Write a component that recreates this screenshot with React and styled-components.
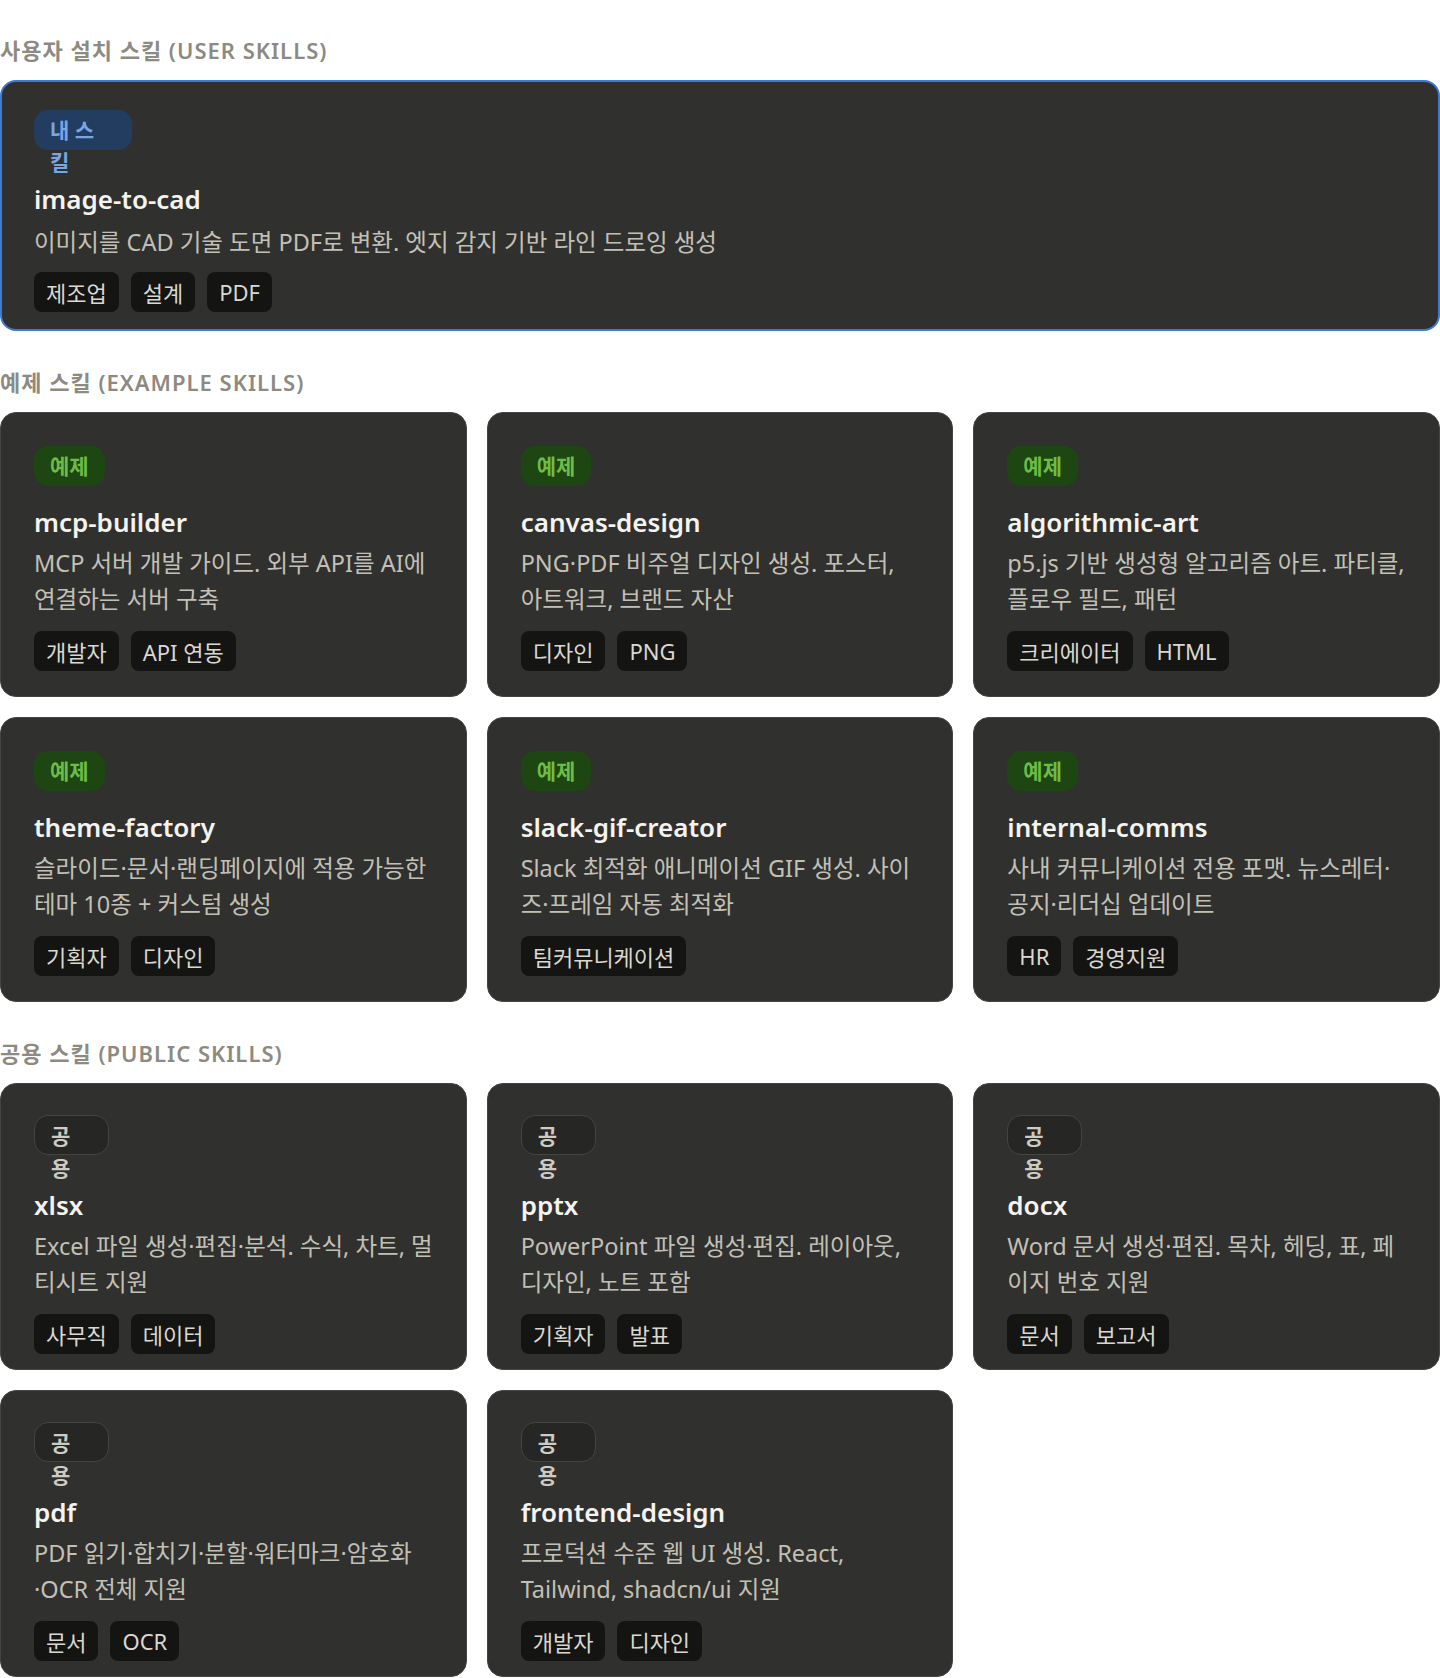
import React from 'react';
import styled, { createGlobalStyle, css } from 'styled-components';

const GlobalStyle = createGlobalStyle`
    html, body {
        margin: 0;
        padding: 0;
        background: #ffffff;
    }
    body {
        font-family: "Noto Sans", "Noto Sans CJK KR", sans-serif;
    }
    * {
        box-sizing: border-box;
    }
`;

const Page = styled.div`
    width: 1440px;
    padding-top: 36px;
    padding-bottom: 8px;
`;

const Section = styled.section`
    & + & {
        margin-top: 37px;
    }
`;

const Heading = styled.h2`
    margin: 0 0 16px;
    font-size: 22px;
    line-height: 28px;
    font-weight: 600;
    letter-spacing: 1px;
    color: #8d8a82;
`;

const Grid = styled.div`
    display: grid;
    grid-template-columns: ${p => (p.$single ? '1fr' : 'repeat(3, 1fr)')};
    gap: 20px;
`;

const cardLook = {
    mine: css`
        border: 2px solid #3c7ad3;
        padding: 28px 32px 17px 32px;
    `,
    example: css`
        border: 1px solid #444441;
        padding: 33px 32px 25px 33px;
    `,
    public: css`
        border: 1px solid #444441;
        padding: 33px 32px 15px 33px;
    `,
};

const Card = styled.div`
    display: flex;
    flex-direction: column;
    align-items: flex-start;
    background: #30302e;
    border-radius: 16px;
    ${p => cardLook[p.$kind]}
`;

const badgeSlot = {
    mine: css`height: 53px;`,
    example: css`height: 40px;`,
    public: css`height: 54px; margin-top: -2px;`,
};

const BadgeSlot = styled.div`
    ${p => badgeSlot[p.$kind]}
`;

const badgeLook = {
    mine: css`
        width: 98px;
        background: #233d60;
        color: #79a6e2;
    `,
    example: css`
        background: #1d4613;
        color: #6dbd45;
    `,
    public: css`
        width: 75px;
        background: #262624;
        border: 1px solid #444441;
        padding-left: 16px;
        color: #cdcbc2;
    `,
};

const Badge = styled.div`
    display: inline-block;
    height: 40px;
    padding: 4px 16px;
    border-radius: 14px;
    font-size: 21px;
    line-height: 32px;
    font-weight: 600;
    overflow: visible;
    ${p => badgeLook[p.$kind]}
`;

const BadgeText = styled.span`
    display: block;
    max-width: ${p => (p.$kind === 'mine' ? '2.6em' : p.$kind === 'public' ? '1.5em' : 'none')};
    white-space: ${p => (p.$kind === 'example' ? 'nowrap' : 'normal')};
`;

const Title = styled.h3`
    margin: 19px 0 0;
    font-size: 26px;
    line-height: 34px;
    font-weight: 600;
    color: #f4f3ee;
`;

const Desc = styled.p`
    margin: ${p => (p.$kind === 'mine' ? '8px 0 -2px' : '6px 0 0')};
    font-size: 23.5px;
    line-height: 36px;
    color: #c2c0b6;
`;

const DescLine = styled.span`
    display: block;
    white-space: nowrap;
`;

const Tags = styled.div`
    display: flex;
    gap: 12px;
    margin-top: 14px;
`;

const Tag = styled.span`
    display: inline-flex;
    align-items: center;
    height: 40px;
    padding: 0 12px;
    border-radius: 8px;
    background: #141413;
    color: #dad8d0;
    font-size: 22px;
`;

const badgeLabel = {
    mine: '내 스킬',
    example: '예제',
    public: '공용',
};

const sections = [
    {
        title: '사용자 설치 스킬 (USER SKILLS)',
        kind: 'mine',
        skills: [
            { name: 'image-to-cad', lines: ['이미지를 CAD 기술 도면 PDF로 변환. 엣지 감지 기반 라인 드로잉 생성'], tags: ['제조업', '설계', 'PDF'] },
        ],
    },
    {
        title: '예제 스킬 (EXAMPLE SKILLS)',
        kind: 'example',
        skills: [
            { name: 'mcp-builder', lines: ['MCP 서버 개발 가이드. 외부 API를 AI에', '연결하는 서버 구축'], tags: ['개발자', 'API 연동'] },
            { name: 'canvas-design', lines: ['PNG·PDF 비주얼 디자인 생성. 포스터,', '아트워크, 브랜드 자산'], tags: ['디자인', 'PNG'] },
            { name: 'algorithmic-art', lines: ['p5.js 기반 생성형 알고리즘 아트. 파티클,', '플로우 필드, 패턴'], tags: ['크리에이터', 'HTML'] },
            { name: 'theme-factory', lines: ['슬라이드·문서·랜딩페이지에 적용 가능한', '테마 10종 + 커스텀 생성'], tags: ['기획자', '디자인'] },
            { name: 'slack-gif-creator', lines: ['Slack 최적화 애니메이션 GIF 생성. 사이', '즈·프레임 자동 최적화'], tags: ['팀커뮤니케이션'] },
            { name: 'internal-comms', lines: ['사내 커뮤니케이션 전용 포맷. 뉴스레터·', '공지·리더십 업데이트'], tags: ['HR', '경영지원'] },
        ],
    },
    {
        title: '공용 스킬 (PUBLIC SKILLS)',
        kind: 'public',
        skills: [
            { name: 'xlsx', lines: ['Excel 파일 생성·편집·분석. 수식, 차트, 멀', '티시트 지원'], tags: ['사무직', '데이터'] },
            { name: 'pptx', lines: ['PowerPoint 파일 생성·편집. 레이아웃,', '디자인, 노트 포함'], tags: ['기획자', '발표'] },
            { name: 'docx', lines: ['Word 문서 생성·편집. 목차, 헤딩, 표, 페', '이지 번호 지원'], tags: ['문서', '보고서'] },
            { name: 'pdf', lines: ['PDF 읽기·합치기·분할·워터마크·암호화', '·OCR 전체 지원'], tags: ['문서', 'OCR'] },
            { name: 'frontend-design', lines: ['프로덕션 수준 웹 UI 생성. React,', 'Tailwind, shadcn/ui 지원'], tags: ['개발자', '디자인'] },
        ],
    },
];

const SkillCard = ({ skill, kind }) => (
    <Card $kind={kind}>
        <BadgeSlot $kind={kind}>
            <Badge $kind={kind}>
                <BadgeText $kind={kind}>{badgeLabel[kind]}</BadgeText>
            </Badge>
        </BadgeSlot>
        <Title>{skill.name}</Title>
        <Desc $kind={kind}>
            {skill.lines.map(line => <DescLine key={line}>{line}</DescLine>)}
        </Desc>
        <Tags>
            {skill.tags.map(tag => <Tag key={tag}>{tag}</Tag>)}
        </Tags>
    </Card>
);

export default function App() {
    return (
        <Page>
            <GlobalStyle />
            {sections.map(section => (
                <Section key={section.kind}>
                    <Heading>{section.title}</Heading>
                    <Grid $single={section.kind === 'mine'}>
                        {section.skills.map(skill => (
                            <SkillCard key={skill.name} skill={skill} kind={section.kind} />
                        ))}
                    </Grid>
                </Section>
            ))}
        </Page>
    );
}
